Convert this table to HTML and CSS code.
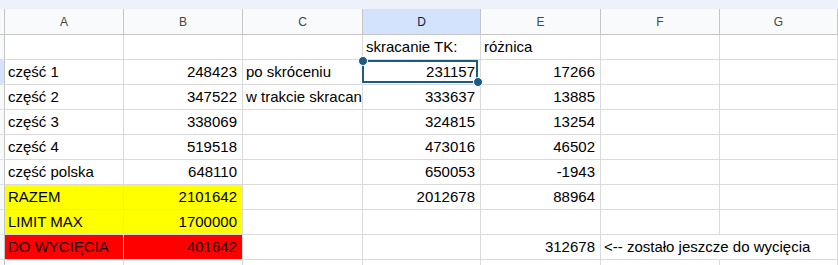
FILE: index.html
```html
<!DOCTYPE html>
<html lang="pl">
<head>
<meta charset="utf-8">
<link rel="stylesheet" href="styles.css">
</head>
<body>
<div class="topstrip"></div>
<div class="sheet">
  <div class="rh hdr"></div>
  <div class="ch">A</div><div class="ch">B</div><div class="ch">C</div><div class="ch sel">D</div><div class="ch">E</div><div class="ch">F</div><div class="ch">G</div>

  <div class="rh"></div>
  <div class="c"></div><div class="c"></div><div class="c"></div><div class="c">skracanie TK:</div><div class="c">różnica</div><div class="c"></div><div class="c"></div>

  <div class="rh rsel"></div>
  <div class="c">część 1</div><div class="c n">248423</div><div class="c">po skróceniu</div><div class="c n active">231157<span class="box"><span class="h h1"></span><span class="h h2"></span></span></div><div class="c n">17266</div><div class="c"></div><div class="c"></div>

  <div class="rh"></div>
  <div class="c">część 2</div><div class="c n">347522</div><div class="c clip">w trakcie skracania</div><div class="c n">333637</div><div class="c n">13885</div><div class="c"></div><div class="c"></div>

  <div class="rh"></div>
  <div class="c">część 3</div><div class="c n">338069</div><div class="c"></div><div class="c n">324815</div><div class="c n">13254</div><div class="c"></div><div class="c"></div>

  <div class="rh"></div>
  <div class="c">część 4</div><div class="c n">519518</div><div class="c"></div><div class="c n">473016</div><div class="c n">46502</div><div class="c"></div><div class="c"></div>

  <div class="rh"></div>
  <div class="c">część polska</div><div class="c n">648110</div><div class="c"></div><div class="c n">650053</div><div class="c n">-1943</div><div class="c"></div><div class="c"></div>

  <div class="rh"></div>
  <div class="c yel">RAZEM</div><div class="c n yel">2101642</div><div class="c"></div><div class="c n">2012678</div><div class="c n">88964</div><div class="c"></div><div class="c"></div>

  <div class="rh"></div>
  <div class="c yel">LIMIT MAX</div><div class="c n yel">1700000</div><div class="c"></div><div class="c"></div><div class="c"></div><div class="c"></div><div class="c"></div>

  <div class="rh"></div>
  <div class="c red">DO WYCIĘCIA</div><div class="c n red">401642</div><div class="c"></div><div class="c"></div><div class="c n">312678</div><div class="c over">&lt;-- zostało jeszcze do wycięcia</div><div class="c"></div>

  <div class="rh last"></div>
  <div class="c last"></div><div class="c last"></div><div class="c last"></div><div class="c last"></div><div class="c last"></div><div class="c last"></div><div class="c last"></div>
</div>
</body>
</html>
```
FILE: styles.css
```css
html, body {
  margin: 0;
  padding: 0;
  background: #ffffff;
  overflow: hidden;
}
body {
  width: 838px;
  height: 265px;
  font-family: "Liberation Sans", Arial, sans-serif;
}
.topstrip {
  height: 9px;
  background: #edf2fa;
}
.sheet {
  display: grid;
  grid-template-columns: 5px 119px 119px 120px 118px 120px 119px 118px;
  grid-template-rows: 26px repeat(9, 25px) 5px;
}
.rh {
  background: #f8f9fa;
  border-right: 1px solid #c4c7c5;
  border-bottom: 1px solid #e1e1e1;
}
.rh.hdr {
  border-bottom: 1px solid #c4c7c5;
}
.rh.rsel {
  background: #d3e3fd;
}
.ch {
  background: #f9fafb;
  border-right: 1px solid #c4c7c5;
  border-bottom: 1px solid #c4c7c5;
  font-size: 12px;
  color: #444746;
  display: flex;
  align-items: center;
  justify-content: center;
  padding-top: 1px;
}
.ch.sel {
  background: #d3e3fd;
  color: #041e49;
}
.c {
  position: relative;
  border-right: 1px solid #dadada;
  border-bottom: 1px solid #dadada;
  font-size: 15px;
  color: #000;
  white-space: nowrap;
  overflow: hidden;
  padding: 0 4px 0 3px;
  line-height: 24px;
}
.c.clip {
  text-overflow: clip;
}
.c.last, .rh.last {
  border-bottom: none;
}
.c.n {
  text-align: right;
  padding-right: 5px;
}
.c.over {
  overflow: visible;
  z-index: 2;
  border-right-color: transparent;
}
.yel {
  background: #ffff00;
}
.red {
  background: #ff0000;
  color: #1a0000;
}
.c.active {
  overflow: visible;
  z-index: 3;
}
.box {
  position: absolute;
  left: -1px;
  top: 0;
  width: 112px;
  height: 19px;
  border: 2px solid #1d5b84;
}
.h {
  position: absolute;
  width: 10px;
  height: 10px;
  border-radius: 50%;
  background: #1d5b84;
  border: 1px solid #ffffff;
  box-sizing: border-box;
}
.h1 {
  left: -6px;
  top: -6px;
}
.h2 {
  right: -7px;
  bottom: -6px;
}
```
